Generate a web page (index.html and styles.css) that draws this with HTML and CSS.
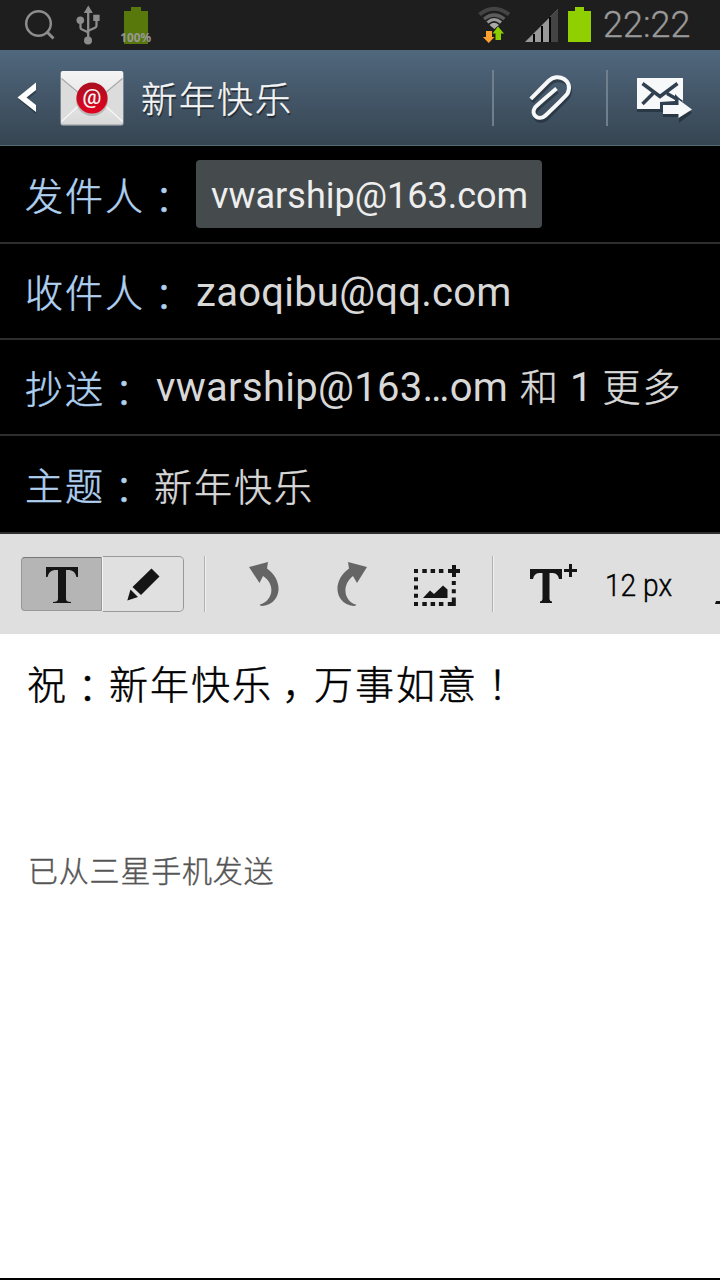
FILE: index.html
```html
<!DOCTYPE html>
<html lang="zh-CN">
<head>
<meta charset="utf-8">
<title>新年快乐</title>
<link rel="stylesheet" href="styles.css">
</head>
<body>
<div class="screen">
  <div class="status">
    <svg class="ico-search" width="32" height="50" viewBox="24 0 32 50"><g fill="none" stroke="#8d8d8d"><circle cx="38.500" cy="23.500" r="12.300" stroke-width="2.500"/><path d="M46.500 31.500L53.500 38.500" stroke-width="3"/></g></svg>
    <svg class="ico-usb" width="26" height="50" viewBox="75 0 26 50"><g fill="#8d8d8d"><path d="M88.300 5.500l4.500 7.500h-9z"/><circle cx="80.300" cy="20.300" r="3.800"/><rect x="93.200" y="14.700" width="6.400" height="6.300"/><circle cx="88" cy="40.500" r="4"/></g><path d="M88.200 12v28M80.500 21v6.500q0 1.500 1.500 2l4.500 2q1.500.7 1.500 2.200M96.500 20v5.500q0 1.500-1.500 2.200l-5 2.300q-1.800.7-1.800 2.300" fill="none" stroke="#8d8d8d" stroke-width="2.300"/></svg>
    <svg class="ico-charge" width="34" height="50" viewBox="119 0 34 50"><path d="M124 11h7V7h10v4h7v33h-24z" fill="#58780b"/><text x="120.300" y="41.800" textLength="31" lengthAdjust="spacingAndGlyphs" class="charge-text">100%</text></svg>
    <svg class="ico-wifi" width="34" height="50" viewBox="478 0 34 50"><g fill="none"><path d="M479.500 14.500Q494 3 509 14.500" stroke="#444" stroke-width="4"/><path d="M484 19Q494 11 504.500 19" stroke="#5c5c5c" stroke-width="3.200"/><path d="M487.500 22.500Q494 16.500 501 22.500" stroke="#999" stroke-width="3"/></g><path d="M489.500 25Q494 20.500 499 25l-4.700 4z" fill="#aaa"/><path d="M486 31h6v6h2.500l-5.800 6-5.800-6h3.100z" fill="#ffa032"/><path d="M498 26.500l6 7h-3v6.500h-5.500v-6.500h-3z" fill="#8bce00"/></svg>
    <svg class="ico-signal" width="34" height="50" viewBox="525 0 34 50"><path d="M558 9v33h-33z" fill="#999"/><path d="M551 16l7-7v33h-7z" fill="#444"/><path d="M533 34h2v8h-2zM541 26h2v16h-2zM549 17h2v25h-2z" fill="#050505"/></svg>
    <svg class="ico-battery" width="23" height="50" viewBox="568 0 23 50"><path d="M568 11h7V7h9v4h7v31h-23z" fill="#90d000"/></svg>
    <span class="clock">22:22</span>
  </div>

  <div class="actionbar">
    <svg class="ico-back" width="24" height="40" viewBox="15 78 24 40"><path d="M36 86L18.500 99.500 36 114v-8.500l-8.500-6L36 92.500z" fill="#1d2730" opacity=".5"/><path d="M36 82.500L17.500 97.500 36 112v-7l-9.500-7.500L36 90z" fill="#fff"/></svg>
    <svg class="ico-mail" width="64" height="58" viewBox="60 69 64 58">
      <defs>
        <linearGradient id="paper" x2="0" y2="1"><stop stop-color="#f4f4f4"/><stop offset="1" stop-color="#d9d9d9"/></linearGradient>
        <linearGradient id="seal" x2="0" y2="1"><stop stop-color="#a90f20"/><stop offset="1" stop-color="#e3021f"/></linearGradient>
      </defs>
      <rect x="60.500" y="71" width="63" height="54.500" rx="2.500" fill="#b6b8ba"/>
      <rect x="61" y="71" width="62" height="53" rx="2" fill="url(#paper)"/>
      <path d="M61 79l23 19-23 23z" fill="#dcdcdc"/><path d="M123 79l-23 19 23 23z" fill="#dcdcdc"/>
      <path d="M61.500 78.500L92 104l30.500-25.500" fill="none" stroke="#aaa" stroke-width="1.300"/>
      <path d="M61.500 121.500L84 101M122.500 121.500L100 101" stroke="#f8f8f8" stroke-width="1.200"/>
      <circle cx="92" cy="100" r="16" fill="#777" opacity=".4"/><circle cx="92" cy="98" r="15.500" fill="url(#seal)"/>
      <text x="92" y="104" text-anchor="middle" class="seal-text">@</text>
    </svg>
    <h1 class="title">新年快乐</h1>
    <span class="sep"></span>
    <svg class="ico-clip" width="48" height="54" viewBox="526 72 48 54"><g fill="none" stroke-width="4"><path d="M531.800 98.800L549.500 81C559 71.500 575 81 568.500 93.500Q567 96 546.500 115.500C540 121.500 531 115 536 107.500Q537 106 557.500 88.500" stroke="#1d2730" stroke-opacity=".55" transform="translate(1 3)"/><path d="M531.800 98.800L549.500 81C559 71.500 575 81 568.500 93.500Q567 96 546.500 115.500C540 121.500 531 115 536 107.500Q537 106 557.500 88.500" stroke="#f6f8fa"/></g></svg>
    <span class="sep sep-two"></span>
    <svg class="ico-send" width="60" height="50" viewBox="635 76 60 50"><path d="M637 81h46v31h-46zM663 108h16v-8l13 13-13 10v-6h-16z" fill="#1d2730" opacity=".6"/><path d="M637 78h46v31h-46z" fill="#f6f8fa"/><path d="M642.500 83.500L660 96.500 677.500 83.500M642.500 104L653 93.500M667 93.500L682 102" fill="none" stroke="#304050" stroke-width="3.500"/><path d="M660 102l15-1v-7l8 8v8h-23z" fill="#304050"/><path d="M663 105h15.500v-5.500L692 109.500 678.500 118v-4H663z" fill="#f6f8fa"/></svg>
  </div>

  <div class="row row-from"><span class="label">发件人<span class="mid" lang="zh-TW">：</span></span><span class="chip">vwarship@163.com</span></div>
  <div class="row"><span class="label">收件人<span class="mid" lang="zh-TW">：</span></span><span class="value to">zaoqibu@qq.com</span></div>
  <div class="row"><span class="label">抄送<span class="mid" lang="zh-TW">：</span></span><span class="value cc"><span class="cc-mail">vwarship@163…om</span><span class="han">和</span><span class="one">1</span><span class="han">更多</span></span></div>
  <div class="row row-subject"><span class="label">主题<span class="mid" lang="zh-TW">：</span></span><span class="value subject">新年快乐</span></div>

  <div class="toolbar">
    <div class="modes">
      <span class="mode mode-on"><svg width="34" height="38" viewBox="45 564 34 38"><path d="M46 566h32v10h-1.500q-1.500-6.500-7-7H66v29q0 3 5 3v1H53v-1q5 0 5-3v-29h-3.500q-5.500.5-7 7H46z" fill="#151515"/></svg></span>
      <span class="mode mode-pen"><svg width="34" height="34" viewBox="127 566 34 34"><path d="M152.500 567.500l8 8-18.500 18.500-8.500-8zM131.500 588.500l7.500 7.500-10.700 3.500z" fill="#151515"/></svg></span>
    </div>
    <span class="tsep tsep-a"></span>
    <svg class="ico-undo" width="32" height="46" viewBox="248 561 32 46"><path d="M249 567l19-5-1 6.500c17 12 15 35-4.500 37.500q-2 0-3-1.200c13-3.500 17-20 3.500-28.800L259.500 583z" fill="#656565"/></svg>
    <svg class="ico-redo" width="32" height="46" viewBox="336 561 32 46"><path d="M367 567l-19-5 1 6.500c-17 12-15 35 4.500 37.500q2 0 3-1.200c-13-3.500-15-20-3.500-28.800L357 583z" fill="#656565"/></svg>
    <svg class="ico-image" width="48" height="44" viewBox="413 564 48 44"><path d="M414 569h4v4h-4zm8.300 0h4.500v4h-4.500zm8.300 0h4.500v4h-4.500zm8.300 0h4.500v4h-4.500zM414 577.300h4v4h-4zm0 8.200h4v4h-4zm0 8.200h4v4h-4zm0 8.200h4v4h-4zm8.300 0h4.500v4h-4.500zm8.300 0h4.500v4h-4.500zm8.300 0h4.500v4h-4.500zM451.800 581h4v4h-4zm0 8.200h4v4h-4zm0 8.200h4v8.500h-8v-4h4zM452 565h4v4h4v4h-4v4h-4v-4h-4v-4h4zM423 598l7-7.500 4 3.500 9-8.500 4.500 4v8.500z" fill="#151515"/></svg>
    <span class="tsep tsep-b"></span>
    <svg class="ico-size" width="50" height="42" viewBox="529 563 50 42"><path d="M530 569h32v10h-3q-1-5.500-6-6h-3.500v26q0 2 2.500 2.500v1.500h-12v-1.500q2.500-.5 2.500-2.500v-26h-3.500q-5 .5-6 6h-3zM569 564h3v5h5v3h-5v5h-3v-5h-5v-3h5z" fill="#151515"/></svg>
    <span class="px">12 px</span>
    <svg class="ico-more" width="5" height="4" viewBox="0 0 5 4"><path d="M0 4l1-3h4v3z" fill="#151515"/></svg>
  </div>

  <div class="editor">
    <p class="message">祝<span class="mid" lang="zh-TW">：</span>新年快乐<span class="comma">，</span>万事如意<span class="mid bang" lang="zh-TW">！</span></p>
    <p class="signature">已从三星手机发送</p>
  </div>
</div>
</body>
</html>
```
FILE: styles.css
```css
* { box-sizing: border-box; }
body { margin: 0; }
svg { display: block; flex: none; }
.screen {
  width: 720px;
  height: 1280px;
  display: flex;
  flex-direction: column;
  overflow: hidden;
  background: #000;
  font-family: Roboto, "Noto Sans CJK SC", sans-serif;
  white-space: nowrap;
}
.mid { font-family: "Noto Sans CJK TC", sans-serif; line-height: 1; vertical-align: -4px; }
.bang { vertical-align: baseline; }

.status { height: 50px; flex: none; display: flex; background: #1e1e1e; }
.ico-search { margin-left: 24px; }
.ico-usb { margin-left: 19px; }
.ico-charge { margin-left: 18px; }
.charge-text { font: bold 12px "Noto Sans", sans-serif; fill: #999; }
.ico-wifi { margin-left: 325px; }
.ico-signal { margin-left: 13px; }
.ico-battery { margin-left: 9px; }
.clock { margin-left: 12px; font-size: 36px; font-weight: 300; line-height: 51px; color: #999; -webkit-text-stroke: .3px; }

.actionbar {
  height: 96px;
  flex: none;
  display: flex;
  align-items: center;
  background: linear-gradient(#50677d, #364552);
  border-bottom: 1px solid #526b78;
}
.ico-back { margin-left: 15px; }
.ico-mail { margin-left: 21px; }
.seal-text { font: 500 21px Roboto, sans-serif; fill: #f4f4f4; }
.title {
  margin: 0 0 0 17px;
  width: 351px;
  font-size: 36px;
  font-weight: 300;
  -webkit-text-stroke: .4px;
  letter-spacing: 2px;
  line-height: 88px;
  padding-top: 6px;
  color: #f5f5f5;
  text-shadow: 1px 2px 1px #1d2730;
}
.sep { width: 2px; height: 56px; background: #6f7f8d; }
.ico-clip { margin-left: 31px; margin-top: 2px; }
.sep-two { margin-left: 33px; }
.ico-send { margin-left: 27px; margin-top: 6px; }

.row {
  height: 96px;
  flex: none;
  display: flex;
  align-items: center;
  padding-left: 25px;
  border-bottom: 2px solid #2e2e2e;
  font-size: 40px;
  line-height: 80px;
  color: #d8d8d8;
}
.row-from, .row-subject { height: 98px; }
.label { padding-top: 5px; font-size: 38px; font-weight: 300; letter-spacing: 2px; color: #afd0f0; -webkit-text-stroke: .5px; }
.chip {
  width: 346px;
  height: 68px;
  margin-left: 11px;
  padding-left: 15px;
  border-radius: 4px;
  background: #454a4d;
  color: #eee;
  font-size: 36px;
  line-height: 72px;
}
.to { margin-left: 11px; padding-top: 3px; letter-spacing: .25px; }
.cc { margin-left: 11px; display: flex; padding-top: 2px; }
.cc-mail { width: 354px; letter-spacing: .3px; }
.han { font-size: 38px; font-weight: 300; letter-spacing: 2px; margin-left: 10px; -webkit-text-stroke: .5px; }
.one { margin-left: 10px; }
.subject { margin-left: 9px; padding-top: 8px; font-size: 38px; font-weight: 300; letter-spacing: 2px; -webkit-text-stroke: .5px; }

.toolbar { height: 100px; flex: none; display: flex; align-items: center; background: #dfdfdf; }
.modes { display: flex; width: 163px; height: 56px; margin-left: 21px; }
.mode { display: flex; align-items: center; justify-content: center; }
.mode-on { width: 81px; height: 54px; margin-top: 1px; border: 1px solid #999; border-top-color: #777; border-radius: 4px 0 0 4px; background: #b5b5b5; }
.mode-pen { width: 82px; border: 1px solid #999; border-left-color: #f5f5f5; border-radius: 0 5px 5px 0; background: #e0e0e0; }
.tsep { width: 2px; height: 56px; background: #b0b0b0; border-right: 1px solid #f0f0f0; }
.tsep-a { margin-left: 20px; }
.ico-undo { margin-left: 42px; }
.ico-redo { margin-left: 56px; }
.ico-image { margin-left: 45px; margin-top: 4px; }
.tsep-b { margin-left: 31px; }
.ico-size { margin-left: 35px; }
.px { width: 110px; margin-left: 26px; padding-top: 2px; font-size: 32px; font-weight: 300; color: #000; -webkit-text-stroke: .4px; transform: scaleX(.88); transform-origin: 0 50%; }
.ico-more { margin-left: 1px; margin-top: 36px; }

.editor { height: 644px; flex: none; padding: 20px 0 0 27px; background: #fff; }
.message { margin: 0; height: 64px; font-size: 39px; font-weight: 300; letter-spacing: 2px; line-height: 64px; color: #000; -webkit-text-stroke: .5px; }
.comma { display: inline-block; width: 41px; padding-left: 9px; font-feature-settings: "halt"; }
.signature { margin: 134px 0 0 1px; font-size: 30px; font-weight: 300; letter-spacing: .8px; line-height: 40px; color: #555; -webkit-text-stroke: .4px; }
```
